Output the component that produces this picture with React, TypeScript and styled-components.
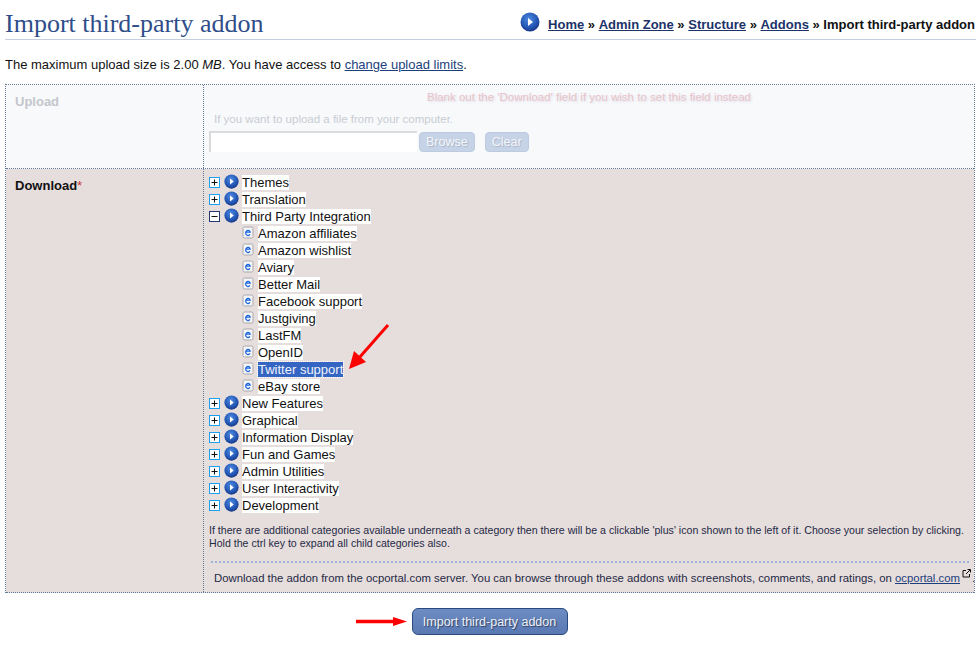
import { Fragment } from "react";
import styled, { createGlobalStyle } from "styled-components";

const GlobalStyle = createGlobalStyle`
  html, body {
    margin: 0;
    padding: 0;
    background: #fff;
    color: #111;
    font-family: "Liberation Sans", Arial, sans-serif;
    font-size: 13px;
  }
`;

const Page = styled.div`
  position: relative;
  width: 976px;
  height: 650px;
  overflow: hidden;
  box-sizing: border-box;
  padding-left: 5px;
`;

const Header = styled.div`
  display: flex;
  justify-content: space-between;
  align-items: flex-end;
  height: 39px;
  border-bottom: 1px solid #c5cfdd;
`;

const Title = styled.h1`
  margin: 0;
  font-family: "Liberation Serif", "Times New Roman", serif;
  font-weight: normal;
  font-size: 26px;
  line-height: 30px;
  color: #2f4d8a;
`;

const Breadcrumb = styled.div`
  display: flex;
  align-items: center;
  height: 30px;
  margin-right: 1px;
  font-weight: bold;
  font-size: 13px;
  white-space: pre;
  color: #111;
`;

const CrumbLink = styled.a`
  color: #1c3268;
  text-decoration: underline;
`;

const CrumbOrb = styled.svg`
  width: 20px;
  height: 20px;
  margin-right: 8px;
  margin-top: -4px;
`;

const Intro = styled.p`
  margin: 17px 0 12px;
  font-size: 13px;
  line-height: 15px;
`;

const BodyLink = styled.a`
  color: #1c3f7c;
  text-decoration: underline;
`;

const FormTable = styled.div`
  width: 970px;
  border: 1px dotted #64789c;
  border-bottom: 0;
  box-sizing: border-box;
`;

const FormRow = styled.div<{ $disabled?: boolean; $height: number }>`
  display: grid;
  grid-template-columns: 198px 1fr;
  height: ${(p) => p.$height}px;
  box-sizing: border-box;
  border-bottom: 1px dotted #64789c;
  background: ${(p) => (p.$disabled ? "#f8f9fb" : "#e6dddd")};
`;

const LabelCell = styled.div<{ $disabled?: boolean }>`
  padding: ${(p) => (p.$disabled ? "9px" : "9px")} 9px 0 9px;
  border-right: 1px dotted #64789c;
  font-weight: bold;
  font-size: 13px;
  line-height: 15px;
  color: ${(p) => (p.$disabled ? "#c3c6cc" : "#111")};
`;

const Required = styled.span`
  color: #c33;
  font-weight: normal;
`;

const UploadCell = styled.div`
  display: flex;
  flex-direction: column;
  padding: 5px 5px 0 5px;
`;

const BlankHint = styled.div`
  text-align: center;
  font-size: 11.5px;
  line-height: 14px;
  color: #e9c3c8;
  text-shadow: 1px 1px 3px #d9d9e4;
`;

const UploadHint = styled.div`
  margin: 8px 0 5px 5px;
  font-size: 11.5px;
  line-height: 14px;
  color: #c8ccd3;
`;

const UploadControls = styled.div`
  display: flex;
  align-items: center;
`;

const FileBox = styled.div`
  width: 208px;
  height: 21px;
  box-sizing: border-box;
  background: #fff;
  border-top: 2px solid #dadbdd;
  border-left: 2px solid #dadbdd;
`;

const GhostButton = styled.button<{ $left: number }>`
  height: 20px;
  margin-left: ${(p) => p.$left}px;
  padding: 0 6px;
  border: 1px solid #bccbe0;
  border-radius: 4px;
  background: #c6d3e7;
  color: #f4f6fa;
  font-family: inherit;
  font-size: 12.5px;
  line-height: 18px;
  text-shadow: 1px 1px 1px #a9b4c6;
`;

const DownloadCell = styled.div`
  padding: 5px 5px 0 5px;
`;

const Tree = styled.div`
  display: flex;
  flex-direction: column;
`;

const TreeRow = styled.div<{ $leaf?: boolean }>`
  display: flex;
  align-items: flex-start;
  height: 17px;
  padding-left: ${(p) => (p.$leaf ? 33 : 0)}px;
`;

const ToggleBox = styled.svg`
  width: 11px;
  height: 11px;
  margin-top: 3px;
  margin-right: 4px;
  flex: none;
`;

const FolderOrb = styled.svg`
  width: 15px;
  height: 15px;
  margin-right: 3px;
  flex: none;
`;

const PageIcon = styled.svg`
  width: 12px;
  height: 13px;
  margin-top: 1px;
  margin-right: 4px;
  flex: none;
`;

const TreeLabel = styled.span<{ $selected?: boolean }>`
  margin-top: 1px;
  height: 15px;
  line-height: 16px;
  font-size: 13px;
  white-space: nowrap;
  background: ${(p) => (p.$selected ? "#3565c2" : "#fff")};
  color: ${(p) => (p.$selected ? "#eef2fa" : "#111")};
  outline: ${(p) => (p.$selected ? "1px dotted #fff" : "none")};
`;

const TreeNote = styled.div`
  margin-top: 10px;
  font-size: 10.6px;
  line-height: 13px;
  color: #1f2a44;
`;

const Divider = styled.div`
  margin: 11px 0 0 2px;
  width: 758px;
  border-top: 2px dotted #9db3d6;
`;

const DownloadNote = styled.div`
  margin: 6px 0 0 5px;
  font-size: 11.35px;
  line-height: 14px;
  color: #1f2a44;
  white-space: nowrap;
`;

const ExternalIcon = styled.svg`
  width: 9px;
  height: 9px;
  margin: 0 1px 0 2px;
  vertical-align: 4px;
`;

const Actions = styled.div`
  display: flex;
  justify-content: center;
  margin: 15px 0 0 -2px;
`;

const SubmitButton = styled.button`
  width: 156px;
  height: 27px;
  padding: 0;
  border: 1px solid #2b4a80;
  border-radius: 6px;
  background: linear-gradient(#6c8cc3, #5a79b2);
  color: #eef1f7;
  font-family: inherit;
  font-size: 12.5px;
  text-shadow: 1px 1px 1px #2d3e60;
`;

const ArrowLayer = styled.svg`
  position: absolute;
  left: 0;
  top: 0;
  width: 976px;
  height: 650px;
  pointer-events: none;
`;

const Orb = ({ as: Wrapper, id }: { as: typeof FolderOrb; id: string }) => (
  <Wrapper viewBox="0 0 20 20">
    <defs>
      <radialGradient id={id} cx="0.45" cy="0.35" r="0.7">
        <stop offset="0" stopColor="#4f8be0" />
        <stop offset="0.6" stopColor="#2559b8" />
        <stop offset="1" stopColor="#15327c" />
      </radialGradient>
    </defs>
    <circle cx="10" cy="10" r="9.5" fill={`url(#${id})`} />
    <path d="M8 6 L13 10 L8 14 Z" fill="#fff" />
  </Wrapper>
);

const Toggle = ({ open }: { open?: boolean }) => (
  <ToggleBox viewBox="0 0 11 11">
    <rect x="0.5" y="0.5" width="10" height="10" fill="#fff" stroke={open ? "#1f3a70" : "#1e9ff0"} />
    <path d={open ? "M2.5 5.5H8.5" : "M2.5 5.5H8.5M5.5 2.5V8.5"} stroke="#111" fill="none" />
  </ToggleBox>
);

const Leaf = () => (
  <PageIcon viewBox="0 0 12 13">
    <rect x="1" y="1" width="10" height="11" rx="1.5" fill="#f4f4f6" stroke="#a9a9ad" />
    <path d="M3.8 6.2H8.2A2.3 2.6 0 1 0 7.9 8.4" fill="none" stroke="#1763e0" strokeWidth="1.2" />
  </PageIcon>
);

type Node = { label: string; open?: boolean; items?: string[] };

const tree: Node[] = [
  { label: "Themes" },
  { label: "Translation" },
  {
    label: "Third Party Integration",
    open: true,
    items: [
      "Amazon affiliates",
      "Amazon wishlist",
      "Aviary",
      "Better Mail",
      "Facebook support",
      "Justgiving",
      "LastFM",
      "OpenID",
      "Twitter support",
      "eBay store",
    ],
  },
  { label: "New Features" },
  { label: "Graphical" },
  { label: "Information Display" },
  { label: "Fun and Games" },
  { label: "Admin Utilities" },
  { label: "User Interactivity" },
  { label: "Development" },
];

export default function App() {
  return (
    <Page>
      <GlobalStyle />
      <Header>
        <Title>Import third-party addon</Title>
        <Breadcrumb>
          <Orb as={CrumbOrb} id="crumb-orb" />
          <CrumbLink>Home</CrumbLink> » <CrumbLink>Admin Zone</CrumbLink> » <CrumbLink>Structure</CrumbLink> »{" "}
          <CrumbLink>Addons</CrumbLink> » Import third-party addon
        </Breadcrumb>
      </Header>
      <Intro>
        The maximum upload size is 2.00 <em>MB</em>. You have access to <BodyLink>change upload limits</BodyLink>.
      </Intro>
      <FormTable>
        <FormRow $disabled $height={84}>
          <LabelCell $disabled>Upload</LabelCell>
          <UploadCell>
            <BlankHint>Blank out the 'Download' field if you wish to set this field instead</BlankHint>
            <UploadHint>If you want to upload a file from your computer.</UploadHint>
            <UploadControls>
              <FileBox />
              <GhostButton $left={2}>Browse</GhostButton>
              <GhostButton $left={10}>Clear</GhostButton>
            </UploadControls>
          </UploadCell>
        </FormRow>
        <FormRow $height={424}>
          <LabelCell>
            Download<Required>*</Required>
          </LabelCell>
          <DownloadCell>
            <Tree>
              {tree.map((node, i) => (
                <Fragment key={node.label}>
                  <TreeRow>
                    <Toggle open={node.open} />
                    <Orb as={FolderOrb} id={`orb-${i}`} />
                    <TreeLabel>{node.label}</TreeLabel>
                  </TreeRow>
                  {node.items?.map((item) => (
                    <TreeRow $leaf key={item}>
                      <Leaf />
                      <TreeLabel $selected={item === "Twitter support"}>{item}</TreeLabel>
                    </TreeRow>
                  ))}
                </Fragment>
              ))}
            </Tree>
            <TreeNote>
              If there are additional categories available underneath a category then there will be a clickable 'plus'
              icon shown to the left of it. Choose your selection by clicking.
              <br />
              Hold the ctrl key to expand all child categories also.
            </TreeNote>
            <Divider />
            <DownloadNote>
              Download the addon from the ocportal.com server. You can browse through these addons with screenshots,
              comments, and ratings, on <BodyLink>ocportal.com</BodyLink>
              <ExternalIcon viewBox="0 0 9 9">
                <path d="M4 1.5H1V8H7.5V5" fill="none" stroke="#111" />
                <path d="M4 5L8 1M5.5 0.5H8.5V3.5" fill="none" stroke="#111" />
              </ExternalIcon>
              .
            </DownloadNote>
          </DownloadCell>
        </FormRow>
      </FormTable>
      <Actions>
        <SubmitButton>Import third-party addon</SubmitButton>
      </Actions>
      <ArrowLayer viewBox="0 0 976 650">
        <path d="M388 325L359 358" stroke="#f00" strokeWidth="3" fill="none" />
        <path d="M349 369L354 351L366 362Z" fill="#f00" />
        <path d="M356 621.5H394" stroke="#f00" strokeWidth="3.5" fill="none" />
        <path d="M393 617L407 621.5L393 626Z" fill="#f00" />
      </ArrowLayer>
    </Page>
  );
}
